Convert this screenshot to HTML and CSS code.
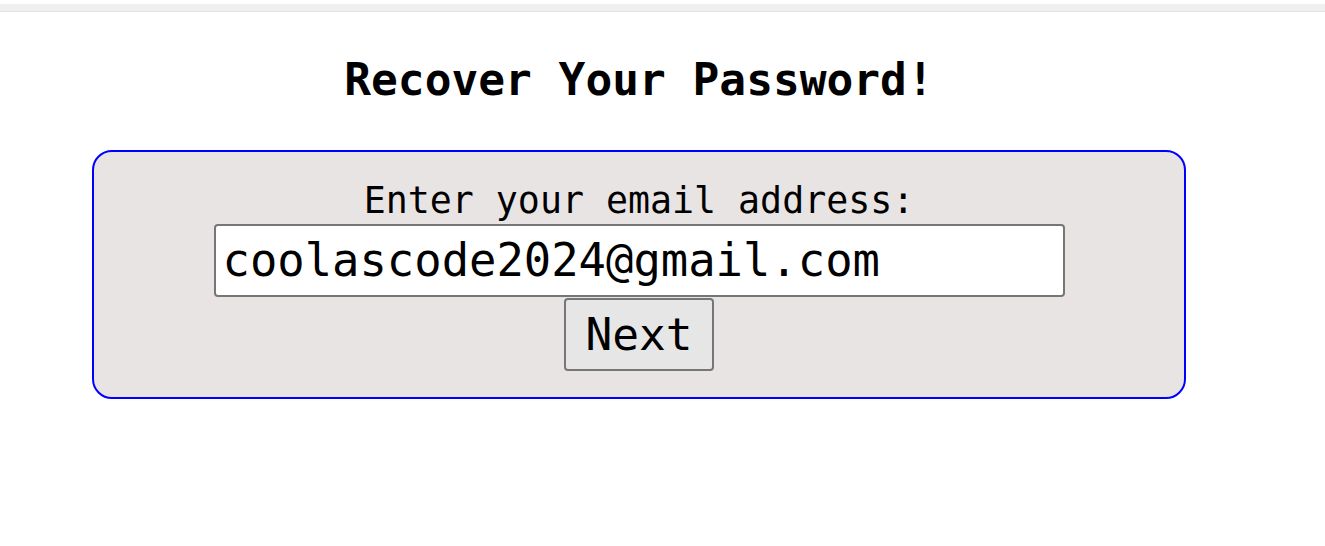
FILE: index.html
```html
<!DOCTYPE html>
<html>
<head>
<meta charset="utf-8">
<title>Recover Your Password</title>
<link rel="stylesheet" href="styles.css">
</head>
<body>
<div class="topbar"></div>
<main class="wrap">
  <h1 class="title">Recover Your Password!</h1>
  <form class="card">
    <label class="label" for="email">Enter your email address:</label>
    <input class="email" id="email" type="email" value="coolascode2024@gmail.com">
    <button class="next" type="button">Next</button>
  </form>
</main>
</body>
</html>
```

FILE: styles.css
```css
html, body {
  margin: 0;
  padding: 0;
  background: #ffffff;
}
body {
  font-family: "DejaVu Sans Mono", "Liberation Mono", monospace;
  color: #000;
}
.topbar {
  margin-top: 4px;
  height: 7px;
  background: #f0f0f0;
  border-bottom: 1px solid #e2e2e2;
}
.wrap {
  width: 1094px;
  margin-left: 92px;
}
.title {
  margin: 42px 0 0 0;
  height: 96px;
  font-size: 44.5px;
  line-height: 52px;
  font-weight: bold;
  text-align: center;
}
.card {
  box-sizing: border-box;
  height: 249px;
  border: 2px solid #0000ff;
  border-radius: 20px;
  background: #e9e4e4;
  padding-top: 28px;
  display: flex;
  flex-direction: column;
  align-items: center;
}
.label {
  font-size: 36.6px;
  line-height: 42px;
  height: 44px;
}
.email {
  box-sizing: border-box;
  width: 851px;
  height: 73px;
  margin: 0;
  padding: 0 7px;
  border: 2px solid #767676;
  border-radius: 4px;
  background: #fff;
  font-family: "DejaVu Sans Mono", "Liberation Mono", monospace;
  font-size: 45.5px;
  color: #000;
  outline: none;
}
.next {
  box-sizing: border-box;
  height: 73px;
  margin: 1px 0 0 0;
  padding: 0 19px;
  border: 2px solid #767676;
  border-radius: 4px;
  background: #e6e6e6;
  font-family: "DejaVu Sans Mono", "Liberation Mono", monospace;
  font-size: 44.5px;
  color: #000;
}
```
